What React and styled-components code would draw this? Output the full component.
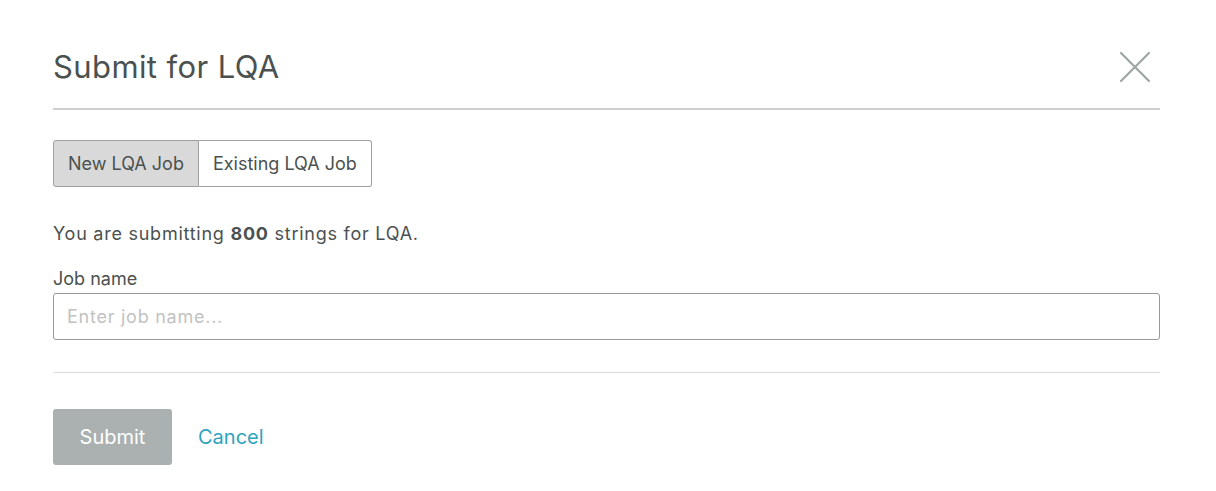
import React, { useState } from "react";
import styled, { createGlobalStyle } from "styled-components";

const GlobalStyle = createGlobalStyle`
  * { box-sizing: border-box; }
  body {
    margin: 0;
    background: #ffffff;
    font-family: Inter, "Liberation Sans", sans-serif;
    color: #4b5150;
  }
`;

function App() {
  const [mode, setMode] = useState("new");
  const [jobName, setJobName] = useState("");

  return (
    <>
      <GlobalStyle />
      <Modal>
        <Header>
          <Title>Submit for LQA</Title>
          <CloseButton aria-label="Close">
            <svg width="32" height="32" viewBox="0 0 32 32">
              <path
                d="M2 2 L30 30 M30 2 L2 30"
                stroke="#9ea6a4"
                strokeWidth="2.2"
                strokeLinecap="round"
              />
            </svg>
          </CloseButton>
        </Header>
        <Body>
          <Toggle>
            <ToggleButton active={mode === "new"} onClick={() => setMode("new")}>
              New LQA Job
            </ToggleButton>
            <ToggleButton
              active={mode === "existing"}
              onClick={() => setMode("existing")}
            >
              Existing LQA Job
            </ToggleButton>
          </Toggle>
          <Summary>
            You are submitting <b>800</b> strings for LQA.
          </Summary>
          <Field>
            <Label htmlFor="jobname">Job name</Label>
            <Input
              id="jobname"
              type="text"
              placeholder="Enter job name..."
              value={jobName}
              onChange={(e) => setJobName(e.target.value)}
            />
          </Field>
        </Body>
        <Footer>
          <SubmitButton disabled={!jobName}>Submit</SubmitButton>
          <CancelLink>Cancel</CancelLink>
        </Footer>
      </Modal>
    </>
  );
}

const Modal = styled.div`
  width: 1216px;
  padding: 0 56px 0 53px;
`;

const Header = styled.div`
  display: flex;
  align-items: center;
  justify-content: space-between;
  height: 110px;
  padding-top: 26px;
  border-bottom: 2px solid #cfcfcf;
`;

const Title = styled.h1`
  margin: 0;
  font-size: 31px;
  line-height: 36px;
  font-weight: 400;
  color: #4b5150;
  letter-spacing: 0.4px;
`;

const CloseButton = styled.button`
  display: flex;
  background: none;
  border: 0;
  padding: 0;
  margin-right: 9px;
  cursor: pointer;
`;

const Body = styled.div`
  padding: 30px 0 32px;
  border-bottom: 1px solid #dcdcdc;
`;

const Toggle = styled.div`
  display: flex;
`;

const ToggleButton = styled.button`
  height: 47px;
  padding: 0 14px;
  font-family: inherit;
  font-size: 18px;
  color: #4b5150;
  background: ${(p) => (p.active ? "#d9d9d9" : "#ffffff")};
  border: 1px solid #a0a0a0;
  cursor: pointer;

  &:first-child {
    border-radius: 3px 0 0 3px;
  }
  &:last-child {
    border-left: 0;
    border-radius: 0 3px 3px 0;
  }
`;

const Summary = styled.p`
  margin: 35px 0 0;
  font-size: 18px;
  line-height: 24px;
  letter-spacing: 0.75px;

  & b {
    font-weight: 700;
  }
`;

const Field = styled.div`
  display: flex;
  flex-direction: column;
  margin-top: 21px;
`;

const Label = styled.label`
  font-size: 18px;
  line-height: 24px;
  margin-bottom: 2px;
`;

const Input = styled.input`
  height: 47px;
  padding: 0 13px;
  font-family: inherit;
  font-size: 18px;
  letter-spacing: 0.75px;
  color: #4b5150;
  border: 1px solid #999999;
  border-radius: 3px;
  outline: 0;

  &::placeholder {
    color: #c2c2c2;
  }
`;

const Footer = styled.div`
  display: flex;
  align-items: center;
  gap: 26px;
  padding-top: 36px;
`;

const SubmitButton = styled.button`
  width: 119px;
  height: 56px;
  font-family: inherit;
  font-size: 20px;
  color: #ffffff;
  background: #aab1b0;
  border: 0;
  border-radius: 3px;
`;

const CancelLink = styled.a`
  font-size: 20px;
  color: #2ea3be;
  cursor: pointer;
`;

export default App;
